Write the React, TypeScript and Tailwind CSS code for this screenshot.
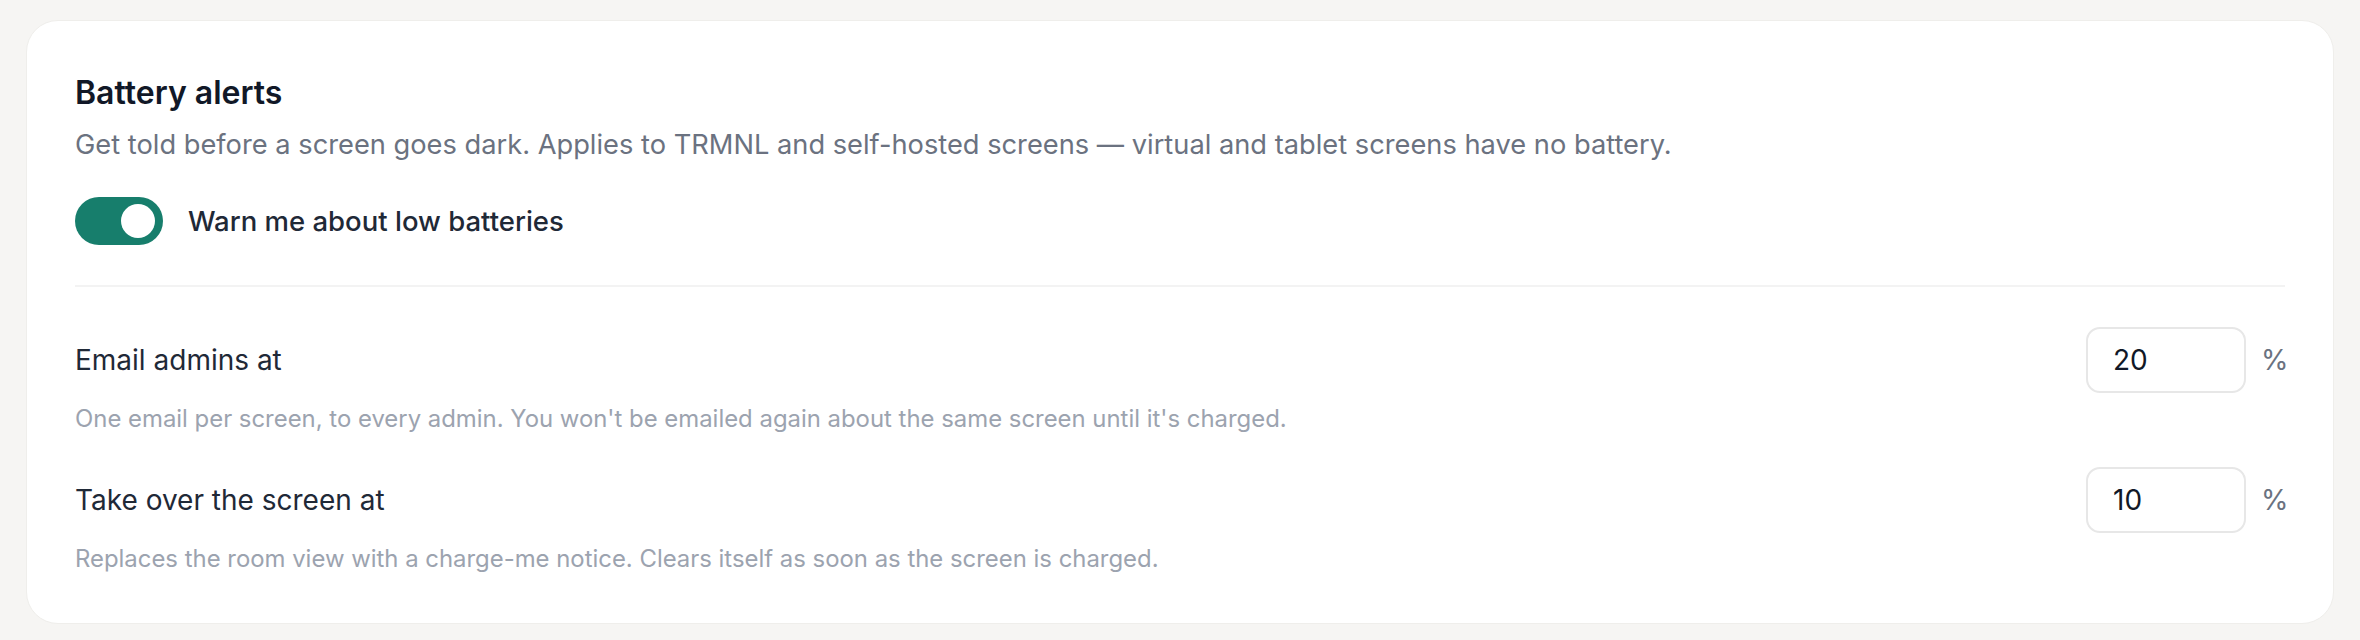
import { useState } from 'react';

const FONT = { fontFamily: 'Inter, "Noto Sans", sans-serif' };

const ThresholdRow = ({ label, hint, value }: { label: string; hint: string; value: string }) => (
  <div>
    <div className="flex items-center justify-between">
      <span className="text-[28px] leading-[40px] text-[#1f2937]">{label}</span>
      <div className="flex items-center gap-[15px]">
        <input
          defaultValue={value}
          className="w-[160px] h-[66px] rounded-[14px] border-2 border-[#e7e7e7] bg-white px-[25px] text-[28px] text-[#111827] outline-none"
          style={FONT}
        />
        <span className="w-[24px] text-[28px] text-[#6b7280]">%</span>
      </div>
    </div>
    <p className="mt-[10px] text-[23.9px] leading-[32px] text-[#9ca3af]">{hint}</p>
  </div>
);

const App = () => {
  const [enabled, setEnabled] = useState(true);

  return (
    <div className="min-h-[640px] bg-[#f6f5f3] px-[26px] pt-[20px] pb-[19px]" style={FONT}>
      <div className="rounded-[32px] border border-[#efeeeb] bg-white p-[48px]">
        {/* Header */}
        <h2 className="text-[32px] leading-[48px] font-semibold text-[#111827]">Battery alerts</h2>
        <p className="mt-[8px] text-[27.25px] leading-[40px] text-[#6b7280]">
          Get told before a screen goes dark. Applies to TRMNL and self-hosted screens — virtual and tablet screens have no battery.
        </p>

        {/* Toggle */}
        <div className="mt-[32px] flex items-center gap-[25px]">
          <button
            onClick={() => setEnabled(!enabled)}
            className={`relative h-[48px] w-[88px] rounded-full ${enabled ? 'bg-[#177e6c]' : 'bg-[#d1d5db]'}`}
          >
            <span
              className={`absolute top-[7px] h-[34px] w-[34px] rounded-full bg-white ${enabled ? 'left-[46px]' : 'left-[7px]'}`}
            />
          </button>
          <span className="text-[27.5px] leading-[40px] font-medium text-[#1f2937]">Warn me about low batteries</span>
        </div>

        <div className="mt-[40px] h-[2px] bg-[#f3f3f3]" />

        <div className="mt-[40px] flex flex-col gap-[32px]">
          <ThresholdRow
            label="Email admins at"
            hint="One email per screen, to every admin. You won't be emailed again about the same screen until it's charged."
            value="20"
          />
          <ThresholdRow
            label="Take over the screen at"
            hint="Replaces the room view with a charge-me notice. Clears itself as soon as the screen is charged."
            value="10"
          />
        </div>
      </div>
    </div>
  );
};

export default App;
